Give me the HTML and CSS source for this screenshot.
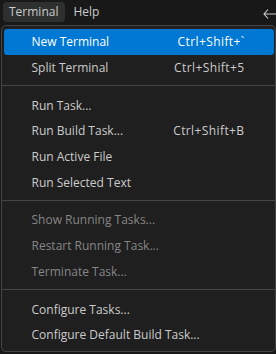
FILE: index.html
```html
<!DOCTYPE html>
<html>
<head>
<meta charset="utf-8">
<link rel="stylesheet" href="styles.css">
</head>
<body>
<div class="menubar">
  <div class="menubar-item active">Terminal</div>
  <div class="menubar-item">Help</div>
  <svg class="back" width="14" height="12" viewBox="0 0 14 12"><path d="M5 1.5 L1 6 L5 10.5 M1 6 H14" fill="none" stroke="#cccccc" stroke-width="1.1"/></svg>
</div>
<div class="menu">
  <div class="item selected"><span class="label">New Terminal</span><span class="key">Ctrl+Shift+`</span></div>
  <div class="item"><span class="label">Split Terminal</span><span class="key">Ctrl+Shift+5</span></div>
  <div class="sep"></div>
  <div class="item"><span class="label">Run Task...</span></div>
  <div class="item"><span class="label">Run Build Task...</span><span class="key">Ctrl+Shift+B</span></div>
  <div class="item"><span class="label">Run Active File</span></div>
  <div class="item"><span class="label">Run Selected Text</span></div>
  <div class="sep"></div>
  <div class="item disabled"><span class="label">Show Running Tasks...</span></div>
  <div class="item disabled"><span class="label">Restart Running Task...</span></div>
  <div class="item disabled"><span class="label">Terminate Task...</span></div>
  <div class="sep"></div>
  <div class="item"><span class="label">Configure Tasks...</span></div>
  <div class="item"><span class="label">Configure Default Build Task...</span></div>
</div>
</body>
</html>
```
FILE: styles.css
```css
html, body {
  margin: 0;
  padding: 0;
  background: #181818;
  width: 276px;
  height: 354px;
  overflow: hidden;
  font-family: "Open Sans", "Noto Sans", sans-serif;
  font-size: 12px;
  color: #cccccc;
}
.menubar {
  height: 25px;
  display: flex;
  align-items: flex-start;
  padding-left: 3px;
  position: relative;
}
.menubar-item {
  margin-top: 2px;
  height: 20px;
  line-height: 20px;
  padding: 0 7px 0 6px;
  border-radius: 4px;
  margin-right: 2px;
}
.menubar-item.active {
  background: #2e2f2f;
}
.back {
  position: absolute;
  left: 263px;
  top: 8px;
}
.menu {
  margin-left: 1px;
  width: 270px;
  border: 1px solid #454545;
  border-radius: 5px;
  background: #1f1f1f;
  padding: 3px 1px 3px 2px;
  box-sizing: content-box;
}
.item {
  height: 25.7px;
  display: flex;
  align-items: center;
  border-radius: 3px;
  padding-left: 27.5px;
  padding-right: 29.5px;
}
.item .label {
  flex: 1;
  white-space: nowrap;
}
.item .key {
  white-space: nowrap;
  text-align: right;
  letter-spacing: 0.4px;
}
.item.selected {
  background: #0078d4;
  color: #ffffff;
}
.item.disabled {
  color: #868686;
}
.sep {
  margin: 5px -2px 6px -2px;
  border-top: 1px solid #454545;
}
```
